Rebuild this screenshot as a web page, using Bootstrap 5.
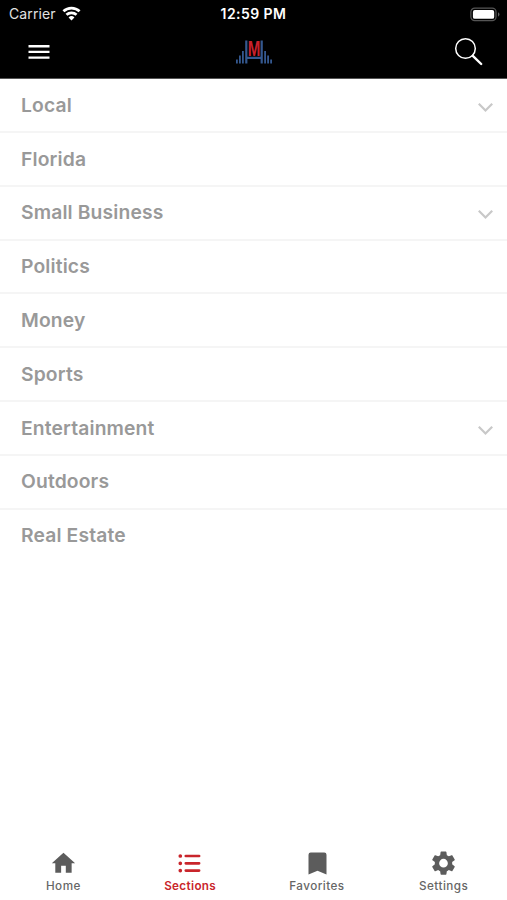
<!DOCTYPE html>
<html lang="en">
<head>
<meta charset="utf-8">
<meta name="viewport" content="width=device-width, initial-scale=1">
<title>Sections</title>
<link href="https://cdn.jsdelivr.net/npm/bootstrap@5.3.0/dist/css/bootstrap.min.css" rel="stylesheet">
<style>
body { font-family: Inter, "Liberation Sans", sans-serif; height: 900px; overflow: hidden; }
svg { display: block; flex: none; overflow: visible; }
.app-head { height: 79.2px; background: #000; color: #fff; border-bottom: 1px solid #555; }
.status { height: 27px; padding: 0 7px 0 7px; display: grid; grid-template-columns: 1fr auto 1fr; align-items: center; }
.carrier { font-size: 14px; letter-spacing: .12px; color: #e2e2e2; line-height: 26px; margin-left: 2px; }
.wifi { margin-left: 6px; }
.clock { font-size: 14px; font-weight: 600; letter-spacing: .45px; line-height: 28px; }
.tools { height: 50px; padding: 0 25px 0 28px; display: grid; grid-template-columns: 1fr auto 1fr; align-items: center; }
.brand { margin-left: -2px; }
.search { margin-right: -2px; }
.sections .list-group-item { height: 53.8px; padding: 1px 13px 1.4px 21px; border-color: #f5f5f5; border-width: 0 0 2px; color: #999; font-size: 19.3px; font-weight: 600; line-height: 24px; letter-spacing: .14px; }
.sections .list-group-item:last-child { border-bottom-width: 0; padding-bottom: 3.4px; }
.sections svg { margin-top: 5px; }
.tabs { height: 57px; }
.tabs .nav-link { padding: 5px 0 0 0; color: #666; font-size: 11.7px; font-weight: 500; line-height: 14px; letter-spacing: .45px; }
.tabs .nav-link.active { color: #c9252b; font-weight: 600; letter-spacing: .35px; }
.tabs svg { margin-bottom: 2px; }
</style>
<script src="https://cdn.jsdelivr.net/npm/bootstrap@5.3.0/dist/js/bootstrap.bundle.min.js"></script>
</head>
<body class="d-flex flex-column bg-white">
<header class="app-head flex-shrink-0">
  <div class="status">
    <div class="d-flex align-items-center">
      <span class="carrier">Carrier</span>
      <svg class="wifi" width="19" height="16" viewBox="0 0 20 16" fill="none" stroke="#fff" stroke-width="2.9"><path d="M1.5 5.2a12.4 12.4 0 0 1 17 0M4.7 8.8a7.8 7.8 0 0 1 10.6 0"/><path d="M10 14.8 6.9 11.6a4.6 4.6 0 0 1 6.2 0z" fill="#fff" stroke="none"/></svg>
    </div>
    <span class="clock">12:59 PM</span>
    <svg class="ms-auto" width="30" height="15" viewBox="0 0 31 15"><rect x=".9" y=".9" width="26" height="13" rx="4" fill="none" stroke="#555" stroke-width="1.3"/><rect x="3" y="2.8" width="22" height="9.2" rx="2" fill="#fff"/><path d="M29 5.2q3 2.3 0 4.6z" fill="#666"/></svg>
  </div>
  <div class="tools">
    <svg width="22" height="16" viewBox="0 0 22 16" fill="#fff"><path d="M.5 1h21v2.4H.5zM.5 6.7h21v2.4H.5zM.5 12.4h21v2.4H.5z"/></svg>
    <svg class="brand" width="36" height="26" viewBox="0 0 36 26"><g fill="#34588f"><path d="M0 20.5h1.8v4H0zM3 16.5h1.8v8H3zM6 12h1.8v12.5H6zM34.2 20.5H36v4h-1.8zM31.2 16.5H33v8h-1.8zM28.2 12H30v12.5h-1.8zM9.2 1.5h2.2v23H9.2zM24.6 1.5h2.2v23h-2.2zM11 17.8h14V20H11z"/></g><text x="11.7" y="17" font-family="Liberation Sans" font-size="21.5" font-weight="700" fill="#c8202b" textLength="12.6" lengthAdjust="spacingAndGlyphs">M</text></svg>
    <svg class="search ms-auto" width="30" height="30" viewBox="0 0 30 30" fill="none" stroke="#fff"><circle cx="11.5" cy="11.5" r="9.8" stroke-width="1.5"/><path d="m18.8 18.8 8.4 8.2" stroke-width="2.4" stroke-linecap="round"/></svg>
  </div>
</header>
<main class="flex-grow-1">
  <ul class="list-group list-group-flush sections">
    <li class="list-group-item d-flex align-items-center justify-content-between"><span>Local</span><svg width="17" height="11" viewBox="0 0 17 11"><path d="m1.8 1.8 6.7 6.7 6.7-6.7" fill="none" stroke="#c8c8c8" stroke-width="2.2"/></svg></li>
    <li class="list-group-item d-flex align-items-center"><span>Florida</span></li>
    <li class="list-group-item d-flex align-items-center justify-content-between"><span>Small Business</span><svg width="17" height="11" viewBox="0 0 17 11"><path d="m1.8 1.8 6.7 6.7 6.7-6.7" fill="none" stroke="#c8c8c8" stroke-width="2.2"/></svg></li>
    <li class="list-group-item d-flex align-items-center"><span>Politics</span></li>
    <li class="list-group-item d-flex align-items-center"><span>Money</span></li>
    <li class="list-group-item d-flex align-items-center"><span>Sports</span></li>
    <li class="list-group-item d-flex align-items-center justify-content-between"><span>Entertainment</span><svg width="17" height="11" viewBox="0 0 17 11"><path d="m1.8 1.8 6.7 6.7 6.7-6.7" fill="none" stroke="#c8c8c8" stroke-width="2.2"/></svg></li>
    <li class="list-group-item d-flex align-items-center"><span>Outdoors</span></li>
    <li class="list-group-item d-flex align-items-center"><span>Real Estate</span></li>
  </ul>
</main>
<nav class="tabs nav nav-justified flex-shrink-0">
  <a class="nav-link nav-item d-flex flex-column align-items-center" href="#"><svg width="28" height="29" viewBox="-.4 -.7 24 24" fill="#5c5c5c"><path d="M10 20v-6h4v6h5v-8h3L12 3 2 12h3v8z"/></svg>Home</a>
  <a class="nav-link nav-item active d-flex flex-column align-items-center" href="#"><svg width="28" height="29" viewBox="0 0 28 29" fill="none" stroke="#c9252b" stroke-linecap="round"><path d="M9.8 8H23.1M9.8 15.3H23.1M9.8 22.6H23.1" stroke-width="2.7"/><path d="M4.3 8h.01M4.3 15.3h.01M4.3 22.6h.01" stroke-width="3.7"/></svg>Sections</a>
  <a class="nav-link nav-item d-flex flex-column align-items-center" href="#"><svg width="28" height="29" viewBox="-.5 -.5 28 29" fill="#5c5c5c"><path d="M7.2 4h13.6a2.2 2.2 0 0 1 2.2 2.2V26l-9-3.8L5 26V6.2A2.2 2.2 0 0 1 7.2 4z"/></svg>Favorites</a>
  <a class="nav-link nav-item d-flex flex-column align-items-center" href="#"><svg width="29" height="29" viewBox="0 -.6 24 24" fill="#5c5c5c"><path d="M19.14 12.94c.04-.3.06-.61.06-.94 0-.32-.02-.64-.07-.94l2.03-1.58a.49.49 0 0 0 .12-.61l-1.92-3.32a.488.488 0 0 0-.59-.22l-2.39.96c-.5-.38-1.03-.7-1.62-.94l-.36-2.54a.484.484 0 0 0-.48-.41h-3.84c-.24 0-.43.17-.47.41l-.36 2.54c-.59.24-1.13.57-1.62.94l-2.39-.96c-.22-.08-.47 0-.59.22L2.74 8.87c-.12.21-.08.47.12.61l2.03 1.58c-.05.3-.09.63-.09.94s.02.64.07.94l-2.03 1.58a.49.49 0 0 0-.12.61l1.92 3.32c.12.22.37.29.59.22l2.39-.96c.5.38 1.03.7 1.62.94l.36 2.54c.05.24.24.41.48.41h3.84c.24 0 .44-.17.47-.41l.36-2.54c.59-.24 1.13-.56 1.62-.94l2.39.96c.22.08.47 0 .59-.22l1.92-3.32c.12-.22.07-.47-.12-.61zM12 15.6A3.6 3.6 0 1 1 12 8.4a3.6 3.6 0 0 1 0 7.2z"/></svg>Settings</a>
</nav>
</body>
</html>
